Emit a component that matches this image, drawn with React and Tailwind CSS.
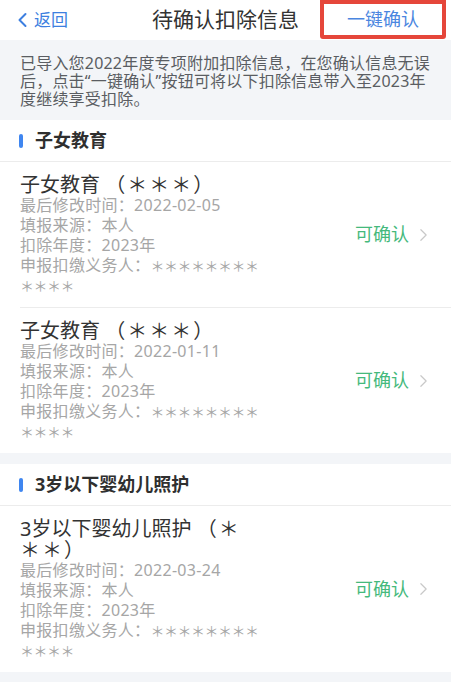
import React from "react";

const sections = [
  {
    name: "子女教育",
    items: [
      { title: "子女教育", date: "2022-02-05" },
      { title: "子女教育", date: "2022-01-11" },
    ],
  },
  {
    name: "3岁以下婴幼儿照护",
    items: [{ title: "3岁以下婴幼儿照护", date: "2022-03-24" }],
  },
];

function Chevron({ className }) {
  return (
    <svg viewBox="0 0 10 16" className={className} fill="none" stroke="currentColor" strokeLinecap="round" strokeLinejoin="round">
      <path d="M2 2 L8 8 L2 14" />
    </svg>
  );
}

function Item({ title, date }) {
  return (
    <div className="flex items-center pt-3 pb-3 pr-[23px]">
      <div className="w-[245px]">
        <div className="w-[228px] text-[20px] leading-[21px] text-[#333]">
          {title} <span className="tracking-[2px] leading-none">（＊＊＊）</span>
        </div>
        <div className="text-[16px] leading-[20px] tracking-[0.3px] text-[#a6a6a6]">
          <div>最后修改时间：{date}</div>
          <div>填报来源：本人</div>
          <div>扣除年度：2023年</div>
          <div>
            申报扣缴义务人：<span className="text-[14px] leading-none tracking-[-0.5px]">＊＊＊＊＊＊＊＊＊＊＊＊</span>
          </div>
        </div>
      </div>
      <div className="flex-1" />
      <div className="flex items-center gap-[10px]">
        <span className="text-[18px] text-[#45b97c]">可确认</span>
        <Chevron className="w-[9px] h-[14px] text-[#c9c9c9] stroke-[1.4]" />
      </div>
    </div>
  );
}

export default function App() {
  return (
    <div className="min-h-screen bg-[#f3f5f8] font-['Noto_Sans','Noto_Sans_CJK_SC',sans-serif]">
      {/* HEADER */}
      <div className="grid grid-cols-[1fr_auto_1fr] items-start h-10 bg-white">
        <div className="flex items-center h-10 pl-[17px] text-[#3d7fe0]">
          <Chevron className="w-[11px] h-[16px] stroke-[2] rotate-180" />
          <span className="ml-[6px] text-[17px]">返回</span>
        </div>
        <div className="h-10 flex items-center text-[21px] text-[#333]">待确认扣除信息</div>
        <div className="flex justify-end pr-[5px]">
          <div className="w-[126px] h-[39px] border-4 border-[#e5463a] rounded-b-[3px] flex items-center justify-center text-[18px] text-[#4a86e0]">
            一键确认
          </div>
        </div>
      </div>

      {/* NOTICE */}
      <div className="px-5 pt-[14px] pb-3 text-[16px] leading-[18px] tracking-[0.2px] text-[#5a5d62]">
        已导入您2022年度专项附加扣除信息，在您确认信息无误后，点击“一键确认”按钮可将以下扣除信息带入至2023年度继续享受扣除。
      </div>

      {/* SECTIONS */}
      <div className="flex flex-col gap-[11px]">
        {sections.map((s) => (
          <div key={s.name} className="bg-white">
            <div className="flex items-center h-[42px] pl-[19px] border-b border-[#ececec]">
              <div className="w-1 h-[14px] rounded-full bg-[#3f86f0]" />
              <span className="ml-3 text-[18px] font-bold text-[#2f2f2f]">{s.name}</span>
            </div>
            <div className="pl-5 divide-y divide-[#ececec]">
              {s.items.map((it, i) => (
                <Item key={i} {...it} />
              ))}
            </div>
          </div>
        ))}
      </div>
    </div>
  );
}
